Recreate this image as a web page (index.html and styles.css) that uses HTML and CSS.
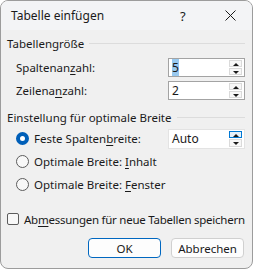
FILE: index.html
```html
<!DOCTYPE html>
<html lang="de">
<head>
  <meta charset="UTF-8" />
  <title>Tabelle einfügen</title>
  <link rel="stylesheet" href="styles.css">
</head>
<body>
  <div class="dialog">
    <div class="titlebar">
      <span class="title">Tabelle einfügen</span>
      <span class="help">?</span>
      <span class="close">
        <svg width="11" height="11" viewBox="0 0 11 11"><path d="M0.5 0.5 L10.5 10.5 M10.5 0.5 L0.5 10.5" stroke="#1a1a1a" stroke-width="1"/></svg>
      </span>
    </div>

    <div class="content">
      <div class="group-head"><span>Tabellengröße</span><span class="rule"></span></div>

      <div class="row">
        <span class="label">Spaltenan<u>z</u>ahl:</span>
        <div class="spin">
          <span class="value"><span class="selected">5</span></span>
          <span class="arrows"><span class="btn up"></span><span class="btn down"></span></span>
        </div>
      </div>
      <div class="row">
        <span class="label">Zeilena<u>n</u>zahl:</span>
        <div class="spin">
          <span class="value">2</span>
          <span class="arrows"><span class="btn up"></span><span class="btn down"></span></span>
        </div>
      </div>

      <div class="group-head second"><span>Einstellung für optimale Breite</span><span class="rule"></span></div>

      <div class="radio-row">
        <span class="radio checked"></span>
        <span class="label">Feste Spalten<u>b</u>reite:</span>
        <div class="spin light">
          <span class="value">Auto</span>
          <span class="arrows"><span class="btn up hover"></span><span class="btn down"></span></span>
        </div>
      </div>
      <div class="radio-row">
        <span class="radio"></span>
        <span class="label">Optimale Breite: <u>I</u>nhalt</span>
      </div>
      <div class="radio-row">
        <span class="radio"></span>
        <span class="label">Optimale Breite: <u>F</u>enster</span>
      </div>

      <div class="check-row">
        <span class="checkbox"></span>
        <span class="label long">Ab<u>m</u>essungen für neue Tabellen speichern</span>
      </div>

      <div class="buttons">
        <button class="default">OK</button>
        <button>Abbrechen</button>
      </div>
    </div>
  </div>
</body>
</html>
```

FILE: styles.css
```css
body {
  margin: 0;
  font-family: "Noto Sans", sans-serif;
  font-size: 11.5px;
  color: #1a1a1a;
  background: #ffffff;
}
.dialog {
  width: 253px;
  height: 269px;
  box-sizing: border-box;
  border: 1px solid #9c9c9c;
  border-radius: 8px;
  overflow: hidden;
  background: #f0f0f0;
}
.titlebar {
  height: 29px;
  background: #f3f4f6;
  display: flex;
  align-items: center;
  padding-left: 10px;
}
.title {
  flex: 1;
  font-size: 12px;
}
.help {
  width: 14px;
  margin-right: 31px;
  font-size: 13px;
}
.close {
  width: 11px;
  height: 11px;
  margin-right: 16px;
  display: flex;
}
.content {
  padding: 6px 7px 0 6px;
}
.group-head {
  height: 15px;
  display: flex;
  align-items: center;
  line-height: 15px;
}
.group-head .rule {
  flex: 1;
  height: 1px;
  background: #dcdcdc;
  margin-left: 5px;
}
.group-head.second {
  margin-top: 9px;
}
.row {
  height: 22px;
  display: flex;
  align-items: center;
  padding-left: 9px;
}
.group-head + .row {
  margin-top: 5px;
}
.row + .row {
  margin-top: 1px;
}
.label {
  flex: 1;
  white-space: nowrap;
}
.label.long {
  letter-spacing: -0.25px;
}
u {
  text-decoration-thickness: 1px;
  text-underline-offset: 2px;
}
.spin {
  width: 77px;
  height: 19px;
  flex-shrink: 0;
  box-sizing: border-box;
  border: 1px solid #a3a3a3;
  background: #ffffff;
  display: flex;
  align-items: stretch;
}
.spin.light {
  height: 20px;
  border-color: #e3e3e3;
}
.spin .value {
  flex: 1;
  padding-left: 3px;
  line-height: 17px;
  font-size: 12px;
}
.selected {
  background: #99c9ef;
}
.arrows {
  width: 13px;
  margin: 0 2px 0 0;
  display: flex;
  flex-direction: column;
  padding: 1px 0;
}
.btn {
  flex: 1;
  position: relative;
  border: 1px solid #dadada;
  background: #f7f7f7;
}
.btn + .btn {
  margin-top: 1px;
}
.btn.hover {
  border-color: #0078d4;
  background: #e5f1fb;
}
.btn::after {
  content: "";
  position: absolute;
  left: 3px;
  top: 2px;
  border-left: 3px solid transparent;
  border-right: 3px solid transparent;
}
.btn.up::after {
  border-bottom: 3px solid #1a1a1a;
}
.btn.down::after {
  border-top: 3px solid #1a1a1a;
}
.radio-row {
  height: 23px;
  display: flex;
  align-items: center;
  padding-left: 9px;
}
.group-head.second + .radio-row {
  margin-top: 2px;
}
.radio {
  width: 13px;
  height: 13px;
  flex-shrink: 0;
  box-sizing: border-box;
  border-radius: 50%;
  border: 1px solid #5c5c5c;
  background: #f8f8f8;
  margin-right: 5px;
}
.radio.checked {
  border: 4px solid #005fb8;
  background: #ffffff;
}
.check-row {
  height: 14px;
  margin-top: 16px;
  display: flex;
  align-items: center;
}
.checkbox {
  width: 12px;
  height: 12px;
  flex-shrink: 0;
  box-sizing: border-box;
  border: 1px solid #5c5c5c;
  border-radius: 2px;
  background: #f8f8f8;
  margin-right: 5px;
}
.buttons {
  margin-top: 12px;
  margin-right: 1px;
  display: flex;
  justify-content: flex-end;
  gap: 10px;
}
button {
  width: 73px;
  height: 20px;
  font-family: inherit;
  font-size: 11.5px;
  color: #1a1a1a;
  background: #fdfdfd;
  border: 1px solid #d0d0d0;
  border-radius: 4px;
  padding: 0;
}
button.default {
  border-color: #0067c0;
}
```
